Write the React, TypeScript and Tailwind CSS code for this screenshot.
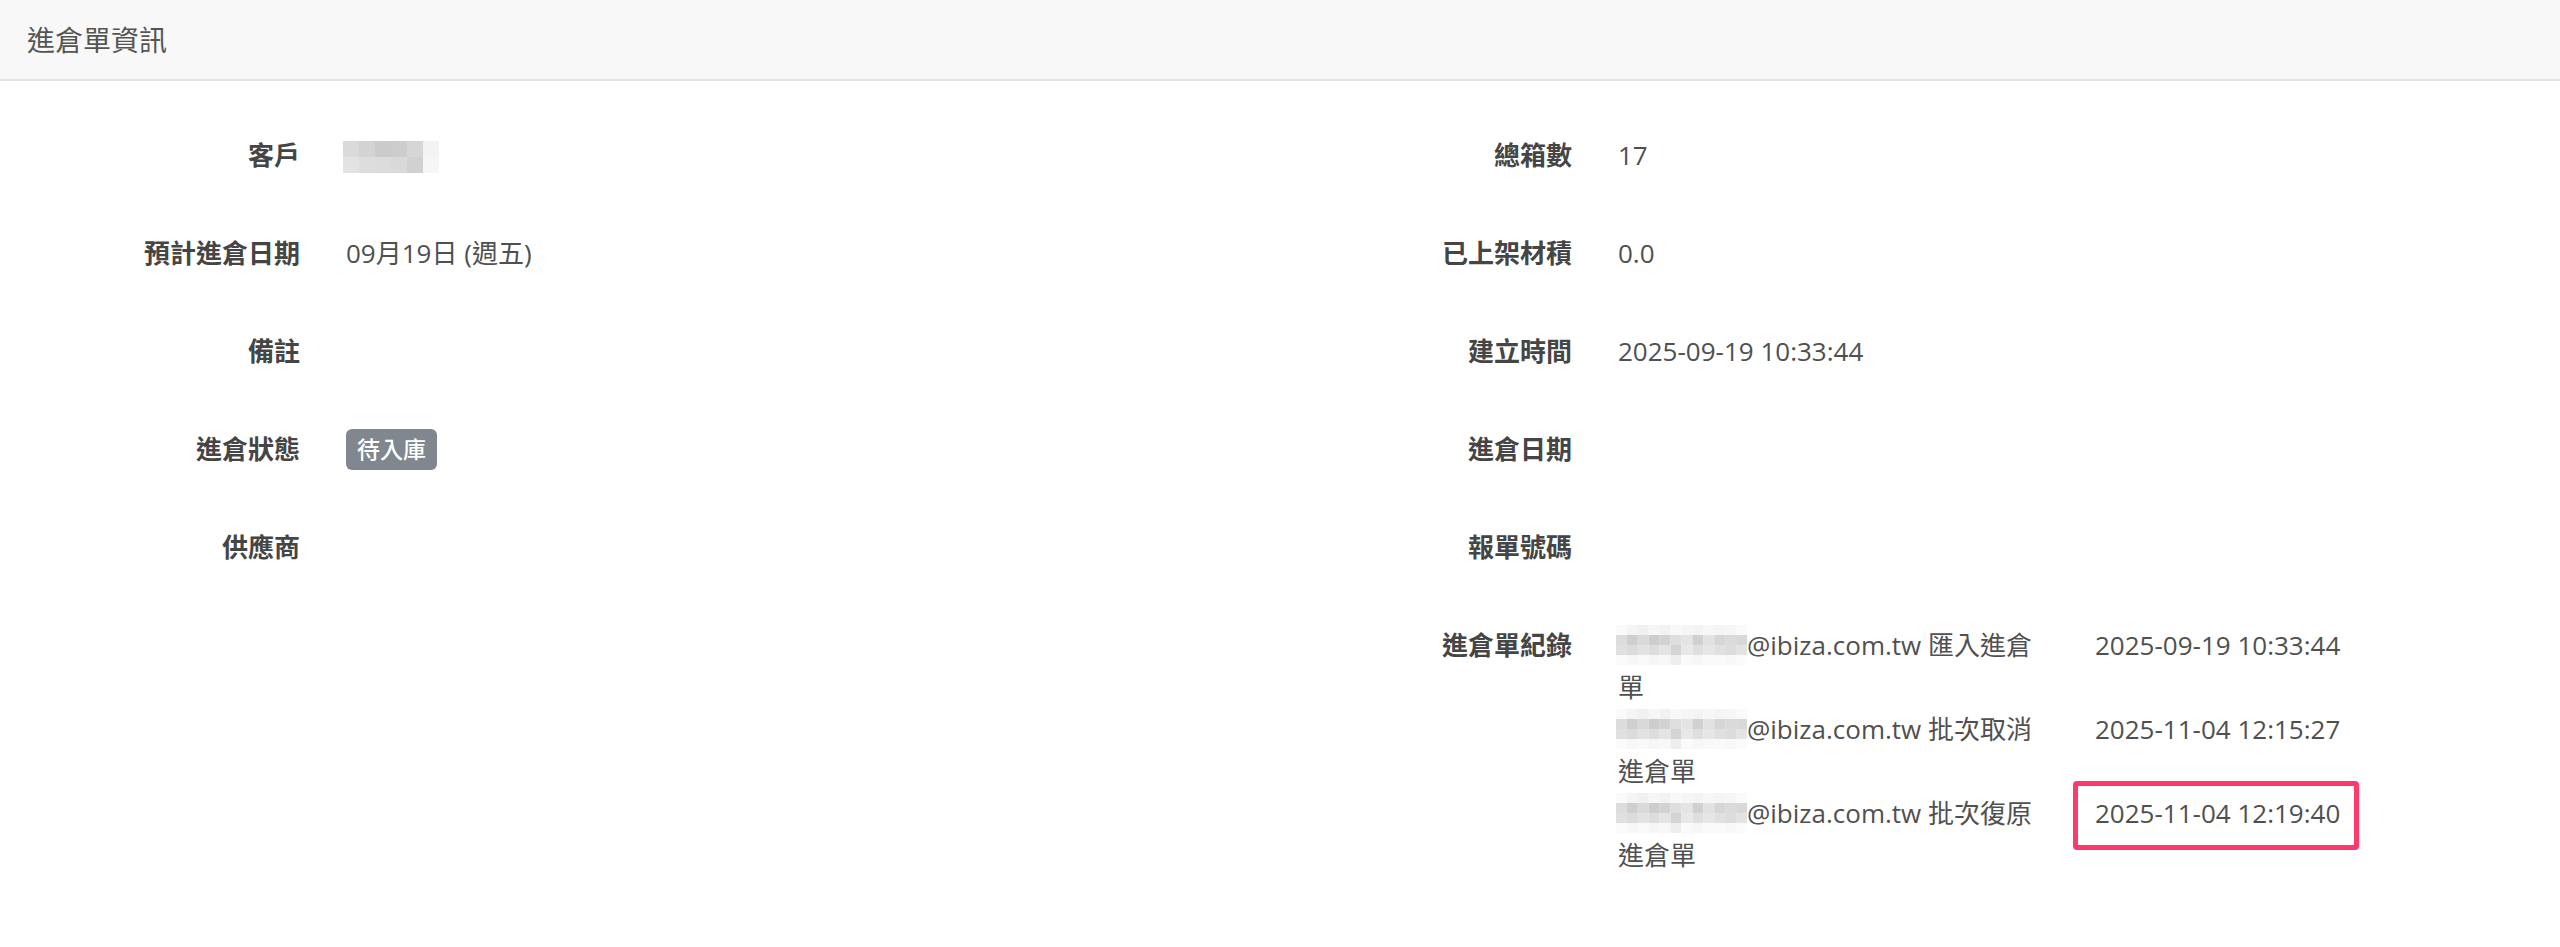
import React from 'react'

// grey pixel blocks standing in for the mosaic-blurred names
function Mosaic({ cells, size, className }: { cells: string[][]; size: number; className?: string }) {
  const w = cells[0].length * size
  const h = cells.length * size
  return (
    <svg width={w} height={h} viewBox={`0 0 ${w} ${h}`} preserveAspectRatio="none" className={className}>
      {cells.map((row, y) =>
        row.map((c, x) => <rect key={`${x}-${y}`} x={x * size} y={y * size} width={size} height={size} fill={c} />)
      )}
    </svg>
  )
}

const customerCells = [
  ['#dadada', '#d3d3d3', '#cbcbcb', '#cdcdcd', '#d6d6d6', '#f3f3f3'],
  ['#e3e3e3', '#dddddd', '#dcdcdc', '#d9d9d9', '#d1d1d1', '#f6f6f6'],
]

const emailCells = [
  ['#fafafa', '#f4f4f4', '#f0f0f0', '#f6f6f6', '#f2f2f2', '#f8f8f8', '#f5f5f5', '#f3f3f3', '#f7f7f7', '#f4f4f4', '#f6f6f6', '#fafafa'],
  ['#dcdcdc', '#cfcfcf', '#d9d9d9', '#cdcdcd', '#d2d2d2', '#dedede', '#e4e4e4', '#d0d0d0', '#e2e2e2', '#d6d6d6', '#dadada', '#d8d8d8'],
  ['#e0e0e0', '#dbdbdb', '#e2e2e2', '#dddddd', '#e4e4e4', '#d4d4d4', '#e8e8e8', '#dfdfdf', '#e6e6e6', '#e0e0e0', '#dcdcdc', '#e3e3e3'],
  ['#fbfbfb', '#f7f7f7', '#f9f9f9', '#f6f6f6', '#f8f8f8', '#eeeeee', '#fafafa', '#f7f7f7', '#f9f9f9', '#fafafa', '#f8f8f8', '#fbfbfb'],
]

function Row({ label, children }: { label: string; children?: React.ReactNode }) {
  return (
    <div className="flex items-center py-[28px] leading-[42px] text-[26px]">
      <div className="w-[292px] shrink-0 text-right font-bold text-[#454545]">{label}</div>
      <div className="ml-[46px] flex items-center text-[#505050]">{children}</div>
    </div>
  )
}

const logs = [
  { action: '匯入進倉單', time: '2025-09-19 10:33:44' },
  { action: '批次取消進倉單', time: '2025-11-04 12:15:27' },
  { action: '批次復原進倉單', time: '2025-11-04 12:19:40', marked: true },
]

export default function App() {
  return (
    <div className="min-h-screen bg-white font-['Open_Sans','Noto_Sans_CJK_TC',sans-serif]">
      <div className="h-[81px] flex items-center pl-[27px] bg-[#f8f8f8] border-b-2 border-[#e4e4e4] text-[28px] text-[#555]">
        進倉單資訊
      </div>

      <div className="grid grid-cols-2 px-[8px] pt-[25px]">
        <div>
          <Row label="客戶">
            <Mosaic cells={customerCells} size={16} className="-ml-[3px] mt-[4px]" />
          </Row>
          <Row label="預計進倉日期">09月19日 (週五)</Row>
          <Row label="備註" />
          <Row label="進倉狀態">
            <span className="inline-flex h-[41px] items-center px-[11px] rounded-[6px] bg-[#80878e] text-white text-[23px] font-medium leading-none">
              待入庫
            </span>
          </Row>
          <Row label="供應商" />
        </div>

        <div>
          <Row label="總箱數">17</Row>
          <Row label="已上架材積">0.0</Row>
          <Row label="建立時間">2025-09-19 10:33:44</Row>
          <Row label="進倉日期" />
          <Row label="報單號碼" />
          <div className="flex pt-[28px] leading-[42px] text-[26px]">
            <div className="w-[292px] shrink-0 text-right font-bold text-[#454545]">進倉單紀錄</div>
            <div className="ml-[46px] flex flex-col text-[#505050]">
              {logs.map((log) => (
                <div key={log.time} className="flex">
                  <div className="w-[430px]">
                    <Mosaic cells={emailCells} size={11} className="inline-block align-top -ml-[2px] mt-[1px] w-[131px] h-[40px]" />
                    @ibiza.com.tw {log.action}
                  </div>
                  <div className="relative ml-[26px] pl-[21px]">
                    {log.time}
                    {log.marked && (
                      <div className="absolute left-[-1px] top-[-11px] w-[286px] h-[69px] border-[5px] border-[#fc3a6c] rounded-[4px]" />
                    )}
                  </div>
                </div>
              ))}
            </div>
          </div>
        </div>
      </div>
    </div>
  )
}
